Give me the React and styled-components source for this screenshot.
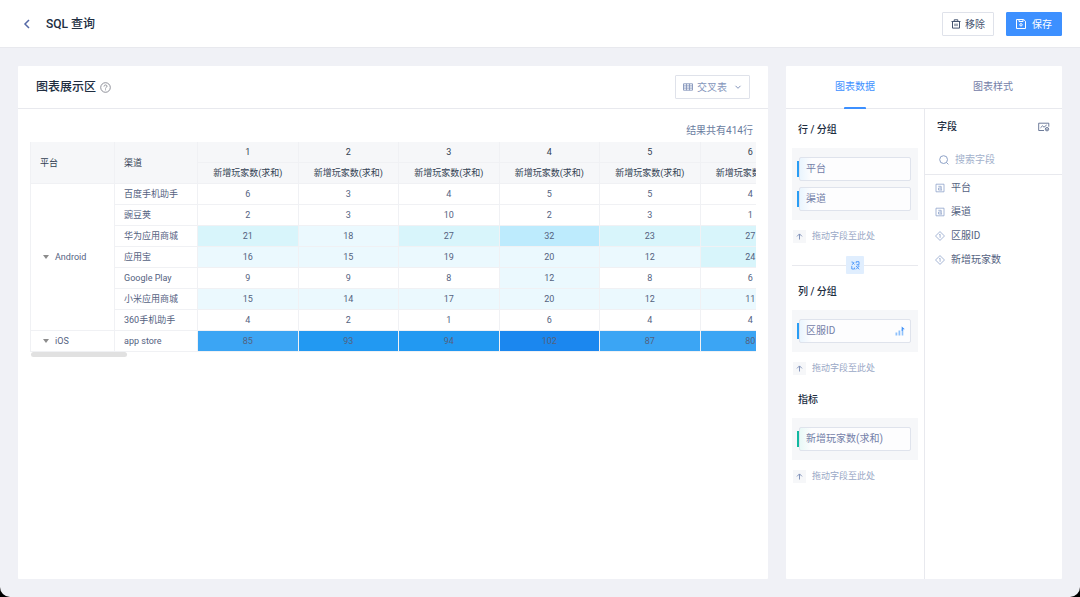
import { useState } from "react";
import styled, { createGlobalStyle } from "styled-components";

const fields = [
  { name: "平台", type: "text" },
  { name: "渠道", type: "text" },
  { name: "区服ID", type: "number" },
  { name: "新增玩家数", type: "number" },
];

const servers = [1, 2, 3, 4, 5, 6];

const groups = [
  {
    platform: "Android",
    rows: [
      { channel: "百度手机助手", values: [6, 3, 4, 5, 5, 4] },
      { channel: "豌豆荚", values: [2, 3, 10, 2, 3, 1] },
      { channel: "华为应用商城", values: [21, 18, 27, 32, 23, 27] },
      { channel: "应用宝", values: [16, 15, 19, 20, 12, 24] },
      { channel: "Google Play", values: [9, 9, 8, 12, 8, 6] },
      { channel: "小米应用商城", values: [15, 14, 17, 20, 12, 11] },
      { channel: "360手机助手", values: [4, 2, 1, 6, 4, 4] },
    ],
  },
  {
    platform: "iOS",
    rows: [{ channel: "app store", values: [85, 93, 94, 102, 87, 80] }],
  },
];

function heat(value) {
  if (value > 100) return "#1b87ef";
  if (value > 90) return "#2299f2";
  if (value > 60) return "#3ba5f4";
  if (value > 30) return "#bdebfd";
  if (value > 20) return "#d8f5fb";
  if (value > 10) return "#ebf9fe";
  return "#ffffff";
}

export default function App() {
  const [tab, setTab] = useState("data");
  const [chart, setChart] = useState("cross");
  const [search, setSearch] = useState("");

  return (
    <>
      <GlobalStyle />
      <Page>
        <Header>
          <BackButton aria-label="返回">
            <BackIcon />
          </BackButton>
          <PageTitle>SQL 查询</PageTitle>
          <HeaderButton>
            <TrashIcon />
            移除
          </HeaderButton>
          <HeaderButton $primary>
            <SaveIcon />
            保存
          </HeaderButton>
        </Header>

        <Content>
          <ChartPanel>
            <ChartHeader>
              <ChartTitle>图表展示区</ChartTitle>
              <HelpIcon />
              <SelectBox>
                <GridIcon />
                <select aria-label="图表类型" value={chart} onChange={(e) => setChart(e.target.value)}>
                  <option value="cross">交叉表</option>
                </select>
                <ChevronIcon />
              </SelectBox>
            </ChartHeader>
            <ResultCount>结果共有414行</ResultCount>
            <TableWrap>
              <Table>
                <colgroup>
                  <PlatformCol />
                  <ChannelCol />
                  {servers.map((s) => <col key={s} />)}
                </colgroup>
                <thead>
                  <tr>
                    <HeadCell $left rowSpan={2}>平台</HeadCell>
                    <HeadCell $left rowSpan={2}>渠道</HeadCell>
                    {servers.map((s) => <HeadCell key={s}>{s}</HeadCell>)}
                  </tr>
                  <tr>
                    {servers.map((s) => <HeadCell key={s}>新增玩家数(求和)</HeadCell>)}
                  </tr>
                </thead>
                <tbody>
                  {groups.map((group) =>
                    group.rows.map((row, i) => (
                      <tr key={row.channel}>
                        {i === 0 && (
                          <PlatformCell rowSpan={group.rows.length}>
                            <PlatformName>
                              <CaretIcon />
                              {group.platform}
                            </PlatformName>
                          </PlatformCell>
                        )}
                        <Cell $left>{row.channel}</Cell>
                        {row.values.map((value, n) => (
                          <Cell key={n} $color={heat(value)}>{value}</Cell>
                        ))}
                      </tr>
                    ))
                  )}
                </tbody>
              </Table>
              <ScrollThumb />
            </TableWrap>
          </ChartPanel>

          <ConfigPanel>
            <Tabs role="tablist">
              <Tab role="tab" aria-selected={tab === "data"} $active={tab === "data"} onClick={() => setTab("data")}>
                图表数据
              </Tab>
              <Tab role="tab" aria-selected={tab === "style"} $active={tab === "style"} onClick={() => setTab("style")}>
                图表样式
              </Tab>
            </Tabs>
            <ConfigBody>
              <DropColumn>
                <DropSection title="行 / 分组" items={["平台", "渠道"]} />
                <SwapRow>
                  <SwapButton aria-label="行列互换">
                    <SwapIcon />
                  </SwapButton>
                </SwapRow>
                <DropSection title="列 / 分组" items={["区服ID"]} sorted />
                <DropSection title="指标" items={["新增玩家数(求和)"]} accent="#12b8a0" tint="#e9f9f7" />
              </DropColumn>
              <FieldColumn>
                <FieldHeader>
                  <SectionTitle>字段</SectionTitle>
                  <IconButton aria-label="字段设置">
                    <FieldSettingIcon />
                  </IconButton>
                </FieldHeader>
                <SearchBox>
                  <SearchIcon />
                  <input
                    aria-label="搜索字段"
                    placeholder="搜索字段"
                    value={search}
                    onChange={(e) => setSearch(e.target.value)}
                  />
                </SearchBox>
                <FieldList>
                  {fields
                    .filter((f) => f.name.includes(search))
                    .map((f) => (
                      <FieldItem key={f.name}>
                        {f.type === "text" ? <TextTypeIcon /> : <NumberTypeIcon />}
                        {f.name}
                      </FieldItem>
                    ))}
                </FieldList>
              </FieldColumn>
            </ConfigBody>
          </ConfigPanel>
        </Content>
      </Page>
    </>
  );
}

function DropSection({ title, items, sorted, accent = "#2a9df4", tint = "#eaf5fe" }) {
  return (
    <section>
      <DropTitle>{title}</DropTitle>
      <DropBox>
        {items.map((item) => (
          <DropRow key={item}>
            <Accent $color={accent} />
            <Chip $tint={tint}>
              {item}
              {sorted && <SortIcon />}
            </Chip>
          </DropRow>
        ))}
      </DropBox>
      <DropHint>
        <HintIcon>
          <UpIcon />
        </HintIcon>
        拖动字段至此处
      </DropHint>
    </section>
  );
}

const BackIcon = () => (
  <svg width="8" height="12" viewBox="0 0 8 12" fill="none" stroke="#5468a6" strokeWidth="1.5">
    <path d="M6 2 2 6l4 4" />
  </svg>
);

const TrashIcon = () => (
  <svg width="10" height="10" viewBox="0 0 10 10" fill="none" stroke="currentColor">
    <path d="M.5 2.5h9M3.2 2.3V.8h3.6v1.5M1.5 2.7v6.4h7V2.7M4 4.6v2.5M6 4.6v2.5" />
  </svg>
);

const SaveIcon = () => (
  <svg width="10" height="10" viewBox="0 0 10 10" fill="none" stroke="currentColor">
    <path d="M.5.5h7.2l1.8 1.8v7.2h-9zM3 .7v1.8h4V.7" />
    <circle cx="5" cy="5.8" r="1.2" />
  </svg>
);

const HelpIcon = () => (
  <svg width="11" height="11" viewBox="0 0 11 11" fill="none" stroke="#83868f" strokeWidth=".9">
    <circle cx="5.5" cy="5.5" r="4.8" />
    <path d="M4 4.5c0-2 3-2 3-.2C7 5.3 5.5 5.3 5.5 6.5M5.5 7.4v.9" />
  </svg>
);

const GridIcon = () => (
  <svg width="10" height="8" viewBox="0 0 10 8" fill="none" stroke="#8495bb" strokeWidth=".9">
    <path d="M.5.8h9v6.4h-9zM.5 2.9h9M.5 5.1h9M3.5.8v6.4M6.5.8v6.4" />
  </svg>
);

const ChevronIcon = () => (
  <svg width="8" height="8" viewBox="0 0 8 8" fill="none" stroke="#8495bb">
    <path d="m1.500 2.800 2.500 2.500 2.500-2.500" />
  </svg>
);

const CaretIcon = () => (
  <svg width="6" height="4" viewBox="0 0 6 4" fill="#8c8c8c">
    <path d="M0 0h6L3 4z" />
  </svg>
);

const UpIcon = () => (
  <svg width="7" height="7" viewBox="0 0 7 7" fill="none" stroke="#8495bb">
    <path d="M3.5 6.5V1M1 3.4 3.5.9 6 3.4" />
  </svg>
);

const SwapIcon = () => (
  <svg width="9" height="9" viewBox="0 0 9 9" fill="none" stroke="#4795fa" strokeWidth=".9">
    <path d="M.5 1h1.2M3 1l-.8 1.7L.8 3.800M1.500 1.500l2 2M5.200.7h2.800v3H5.500M5.200.7v1.500M.8 5v3h2.800V6.500M5 8.300l3-3M5 5l3.200 3.300M6.500 5h1.800" />
  </svg>
);

const SortIcon = () => (
  <svg width="10" height="10" viewBox="0 0 10 10">
    <path fill="#8fc1fb" d="M.5 6.500h1.800V9.500H.5zM3.500 4.500h1.800v5H3.500zM6.700 3h1.600v6.500H6.700z" />
    <path fill="#3d8ff8" d="M6.700.5 9.800 3.300H7.700V5h-1z" />
  </svg>
);

const FieldSettingIcon = () => (
  <svg width="12" height="10" viewBox="0 0 12 10" fill="none" stroke="#5d6d8f" strokeWidth=".9">
    <path d="M6 8.500H.7V1.200h10.100v3.500M2.500 5.800l2-1.900 1.500 1.300 2.700-2.200" />
    <circle cx="9" cy="7.2" r="1.700" />
    <circle cx="9" cy="7.2" r=".4" />
  </svg>
);

const SearchIcon = () => (
  <svg width="10" height="10" viewBox="0 0 10 10" fill="none" stroke="#8da1c6">
    <circle cx="4.6" cy="4.6" r="3.900" />
    <path d="m7.400 7.400 2 2" />
  </svg>
);

const TextTypeIcon = () => (
  <svg width="10" height="10" viewBox="0 0 10 10" fill="none" stroke="#8fa3ca" strokeWidth=".8">
    <path d="M1 1.200h8v7.600H1zM3.300 3.300h2.900v3.900M6.200 5H3.500v2h3.600" />
  </svg>
);

const NumberTypeIcon = () => (
  <svg width="10" height="10" viewBox="0 0 10 10" fill="none" stroke="#8fa3ca" strokeWidth=".8">
    <path d="M5 .6 9.500 5 5 9.400.5 5zM4.200 3.800l.9-.6v3.600" />
  </svg>
);

const GlobalStyle = createGlobalStyle`
  * {
    box-sizing: border-box;
  }
  body {
    margin: 0;
    background: #000000;
    font-family: Roboto, "Noto Sans CJK SC", sans-serif;
    font-size: 10px;
    color: #54627f;
  }
  h1, h2, h3, ul {
    margin: 0;
    padding: 0;
    list-style: none;
  }
  button, input, select {
    font: inherit;
    color: inherit;
    padding: 0;
    border: none;
    background: none;
    outline: none;
  }
  button, select {
    cursor: pointer;
  }
  svg {
    display: block;
    flex-shrink: 0;
  }
`;

const Page = styled.div`
  min-height: 100vh;
  display: flex;
  flex-direction: column;
  background: #f0f1f6;
  border-radius: 0 0 10px 10px;
  overflow: hidden;
`;

const Header = styled.header`
  height: 48px;
  display: flex;
  align-items: center;
  gap: 12px;
  padding: 0 18px;
  background: #ffffff;
  border-bottom: 1px solid #e8e9ee;
`;

const BackButton = styled.button`
  width: 16px;
  height: 24px;
  display: flex;
  align-items: center;
  justify-content: flex-end;
  padding-right: 3px;
`;

const PageTitle = styled.h1`
  flex: 1;
  font-size: 12px;
  line-height: 18px;
  font-weight: 500;
  color: #202d3f;
`;

const HeaderButton = styled.button`
  height: 24px;
  display: flex;
  align-items: center;
  gap: 4px;
  padding: 0 8px;
  border: 1px solid #dfe2ea;
  border-radius: 1px;
  color: #45546f;
  ${(props) => props.$primary && `
    gap: 6px;
    padding: 0 9px;
    border-color: #3d90ff;
    background: #3d90ff;
    color: #ffffff;
  `}
`;

const Content = styled.main`
  flex: 1;
  display: flex;
  gap: 18px;
  padding: 18px;
`;

const ChartPanel = styled.section`
  flex: 1;
  min-width: 0;
  background: #ffffff;
  border-radius: 1px;
`;

const ChartHeader = styled.div`
  height: 43px;
  display: flex;
  align-items: center;
  gap: 4px;
  padding: 0 18px;
  border-bottom: 1px solid #e8e9ee;
`;

const ChartTitle = styled.h2`
  font-size: 12px;
  line-height: 18px;
  font-weight: 500;
  color: #202d3f;
`;

const SelectBox = styled.div`
  height: 24px;
  display: flex;
  align-items: center;
  margin-left: auto;
  padding: 0 7px;
  border: 1px solid #dfe2ea;
  border-radius: 1px;
  color: #8495bb;
  & select {
    appearance: none;
    width: 37px;
    margin-left: 4px;
  }
`;

const ResultCount = styled.div`
  padding: 13px 15px 2px;
  line-height: 18px;
  text-align: right;
  color: #6a7c9f;
`;

const TableWrap = styled.div`
  margin: 0 12px;
  overflow: hidden;
`;

const Table = styled.table`
  width: 771px;
  table-layout: fixed;
  border-collapse: separate;
  border-spacing: 0;
  border-left: 1px solid #f0f1f4;
  font-size: 9px;
  line-height: 12px;
`;

const PlatformCol = styled.col`
  width: 84px;
`;

const ChannelCol = styled.col`
  width: 83px;
`;

const Cell = styled.td`
  height: 21px;
  padding: 0 9px;
  border-right: 1px solid #f0f1f4;
  border-bottom: 1px solid #f0f1f4;
  background: ${(props) => props.$color || "#ffffff"};
  background-clip: padding-box;
  text-align: ${(props) => (props.$left ? "left" : "center")};
  white-space: nowrap;
  color: #54627f;
`;

const HeadCell = styled(Cell).attrs({ as: "th" })`
  background: #f6f7f9;
  font-weight: 400;
  color: #323f52;
`;

const PlatformCell = styled(Cell)`
  padding: 0 12px;
`;

const PlatformName = styled.div`
  display: flex;
  align-items: center;
  gap: 6px;
`;

const ScrollThumb = styled.div`
  width: 96px;
  height: 5px;
  margin-left: 1px;
  border-radius: 3px;
  background: #e1e1e1;
`;

const ConfigPanel = styled.aside`
  width: 276px;
  display: flex;
  flex-direction: column;
  background: #ffffff;
  border-radius: 1px;
`;

const Tabs = styled.div`
  height: 43px;
  display: flex;
  border-bottom: 1px solid #e8e9ee;
`;

const Tab = styled.button`
  flex: 1;
  position: relative;
  line-height: 14px;
  color: ${(props) => (props.$active ? "#3d90ff" : "#7480a8")};
  &::after {
    content: "";
    display: ${(props) => (props.$active ? "block" : "none")};
    position: absolute;
    left: calc(50% - 11px);
    bottom: -1px;
    width: 22px;
    height: 2px;
    border-radius: 1px 1px 0 0;
    background: #3d90ff;
  }
`;

const ConfigBody = styled.div`
  flex: 1;
  display: grid;
  grid-template-columns: 139px 1fr;
`;

const DropColumn = styled.div`
  padding: 3px 6px;
  border-right: 1px solid #e8e9ee;
`;

const SectionTitle = styled.h3`
  font-size: 10px;
  line-height: 18px;
  font-weight: 500;
  color: #202d3f;
`;

const DropTitle = styled(SectionTitle)`
  padding: 9px 6px;
`;

const DropBox = styled.ul`
  display: flex;
  flex-direction: column;
  gap: 6px;
  padding: 9px 7px 9px 5px;
  background: #f6f7f9;
`;

const DropRow = styled.li`
  display: flex;
  align-items: center;
`;

const Accent = styled.span`
  width: 2px;
  height: 16px;
  background: ${(props) => props.$color};
`;

const Chip = styled.div`
  flex: 1;
  height: 24px;
  display: flex;
  align-items: center;
  justify-content: space-between;
  padding: 0 5px 0 6px;
  border: 1px solid #dfe3ec;
  border-radius: 2px;
  background: linear-gradient(90deg, ${(props) => props.$tint}, #fdfdfe 12px);
  line-height: 14px;
  color: #7480a8;
`;

const DropHint = styled.div`
  display: flex;
  align-items: center;
  gap: 6px;
  padding: 10px 0 7px 1px;
  font-size: 9px;
  line-height: 13px;
  color: #9aa8c6;
`;

const HintIcon = styled.span`
  width: 13px;
  height: 13px;
  display: flex;
  align-items: center;
  justify-content: center;
  background: #f6f7f9;
`;

const SwapRow = styled.div`
  display: flex;
  align-items: center;
  margin-top: 6px;
  &::before,
  &::after {
    content: "";
    flex: 1;
    height: 1px;
    background: #e8e9ee;
  }
`;

const SwapButton = styled.button`
  width: 18px;
  height: 18px;
  display: flex;
  align-items: center;
  justify-content: center;
  border-radius: 1px;
  background: #e0eefe;
`;

const FieldColumn = styled.div`
  min-width: 0;
`;

const FieldHeader = styled.div`
  display: flex;
  align-items: center;
  justify-content: space-between;
  padding: 9px 12px;
`;

const IconButton = styled.button`
  display: flex;
`;

const SearchBox = styled.label`
  height: 30px;
  display: flex;
  align-items: center;
  gap: 6px;
  padding: 0 14px;
  border-bottom: 1px solid #e8e9ee;
  & input {
    width: 100%;
    min-width: 0;
  }
  & input::placeholder {
    color: #a3b1cc;
    opacity: 1;
  }
`;

const FieldList = styled.ul`
  padding: 1px 10px;
`;

const FieldItem = styled.li`
  height: 24px;
  display: flex;
  align-items: center;
  gap: 6px;
  line-height: 14px;
`;
